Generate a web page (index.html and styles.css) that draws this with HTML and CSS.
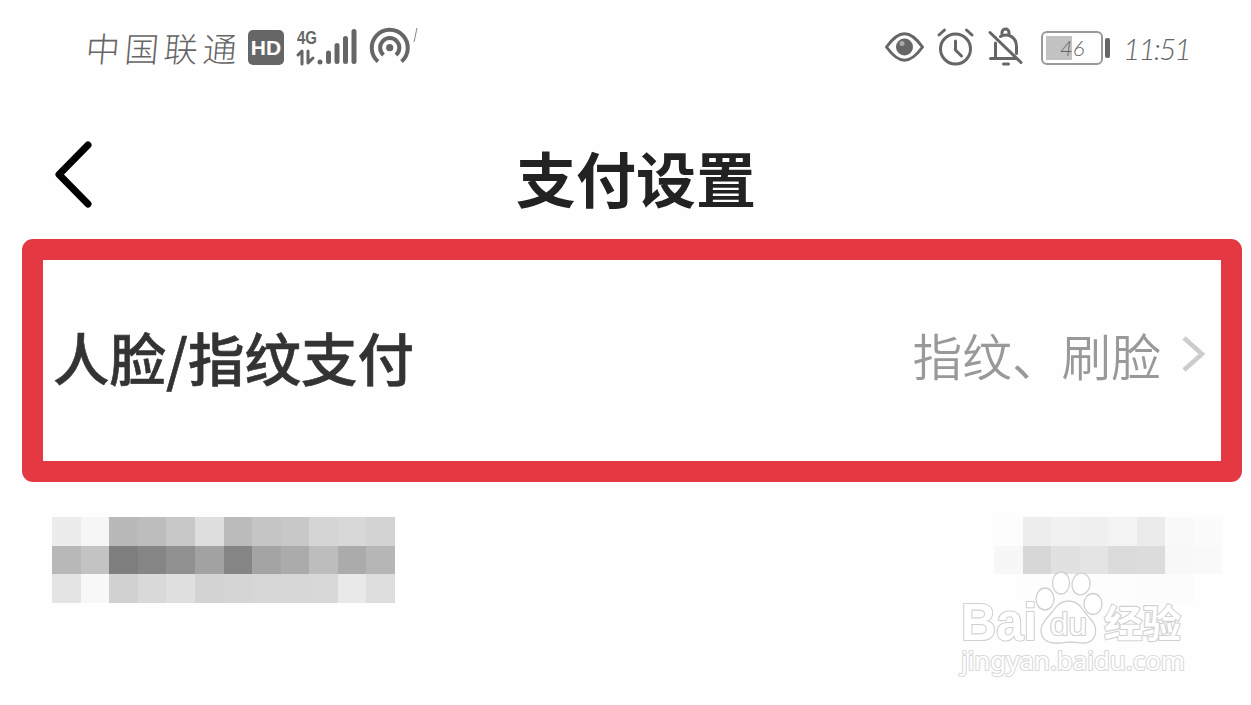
FILE: index.html
```html
<!DOCTYPE html>
<html lang="zh-CN">
<head>
  <meta charset="UTF-8">
  <meta name="viewport" content="width=device-width, initial-scale=1.0">
  <title>支付设置</title>
  <link rel="stylesheet" href="styles.css">
</head>
<body>
  <div class="status-bar">
    <div class="status-left">
      <span class="carrier">中国联通</span>
      <span class="hd">HD</span>
      <svg class="signal" width="62" height="42" viewBox="0 0 62 42">
        <text x="1" y="17" textLength="20" lengthAdjust="spacingAndGlyphs">4G</text>
        <path class="line" d="M2 28l4-4v13M12 24v12l5-5" />
        <path class="bars" d="M24 35v.1M32.500 26v8.500M41 18.500v16M49.500 11.500v23M58 4.500v30" />
      </svg>
      <svg class="hotspot" width="48" height="42" viewBox="0 0 48 42">
        <path d="M9 34.500a18 18 0 1 1 23.500 0M14.500 28a9.600 9.600 0 1 1 12.500 0" />
        <circle cx="20.700" cy="20.700" r="3.600" />
        <path class="thin" d="M48 1l-3 14" />
      </svg>
    </div>
    <div class="status-right">
      <svg class="icon" width="40" height="42" viewBox="0 0 40 42">
        <path d="M1.500 20C9 9.500 14 6.800 19.500 6.800S30 9.500 37.500 20C30 30.500 25 33.200 19.500 33.200S9 30.500 1.500 20z" />
        <circle class="fill" cx="19.500" cy="20" r="8.500" />
        <circle class="shine" cx="17" cy="16.500" r="2.500" />
      </svg>
      <svg class="icon alarm" width="38" height="42" viewBox="0 0 38 42">
        <circle cx="18.500" cy="22" r="15" />
        <path d="M18.500 14v9l6 6M2 8l5.500-5M35 8l-5.500-5" />
      </svg>
      <svg class="icon bell" width="36" height="42" viewBox="0 0 36 42">
        <path d="M2 5.500l31 30M7.500 16v15.500M2.500 31.500h25M12.500 9.500c8-4 16 1 16 10v7" />
        <path d="M14 8V5.500a3.500 3.500 0 0 1 7 0V8M15.500 37h5" />
      </svg>
      <div class="battery"><span>46</span></div>
      <span class="battery-tip"></span>
      <span class="time">11:51</span>
    </div>
  </div>

  <header class="header">
    <svg class="back" width="40" height="68" viewBox="0 0 40 68">
      <path d="M34 4L5 33.500l29 29.500" />
    </svg>
    <h1>支付设置</h1>
  </header>

  <div class="row highlight">
    <span class="label">人脸/指纹支付</span>
    <span class="value">指纹、刷脸</span>
    <svg class="arrow" width="24" height="38" viewBox="0 0 24 38">
      <path d="M2 3l18 16L2 35" />
    </svg>
  </div>

  <div class="row masked">
    <div class="mosaic mosaic-left" id="maskLabel"></div>
    <div class="mosaic mosaic-right" id="maskValue"></div>
  </div>

  <svg class="watermark" width="240" height="120" viewBox="0 0 240 120">
    <text class="logo" x="6" y="74" textLength="76" lengthAdjust="spacingAndGlyphs">Bai</text>
    <ellipse cx="90" cy="33" rx="9" ry="11" />
    <ellipse cx="106" cy="17" rx="8.500" ry="11" />
    <ellipse cx="126" cy="18" rx="9" ry="11" transform="rotate(8 126 18)" />
    <ellipse cx="138" cy="38" rx="9" ry="10.500" />
    <path d="M101 41c7-8 18-8 25 0 3 5 7 9 12 15 6 10 1 21-9 21-6 0-10-1-15-1s-9 2-15 1c-13-1-16-12-10-21 4-6 8-9 12-15z" />
    <text class="du" x="95" y="69" textLength="37" lengthAdjust="spacingAndGlyphs">du</text>
    <text class="cn" x="149" y="71" textLength="77" lengthAdjust="spacingAndGlyphs">经验</text>
    <text class="url" x="6" y="104" textLength="224" lengthAdjust="spacingAndGlyphs">jingyan.baidu.com</text>
  </svg>

  <script>
    // gray level of every mosaic cell, row by row
    const maskLabel = [
      "ec f6 b9 bd c8 de bb c5 c8 d5 d8 d3",
      "b8 c3 7e 85 90 a2 85 a4 ab bd ab b6",
      "e4 f8 d1 d9 df d3 d5 d7 d7 d8 e9 dd"
    ];
    const maskValue = [
      "fd ed f1 ef f3 eb f9 fb",
      "f7 d7 e1 e4 db dc f8 f9",
      "fe fd fd fd fd fc fc fe"
    ];

    function drawMosaic(id, rows) {
      const box = document.getElementById(id);
      rows.join(" ").split(" ").forEach(level => {
        const cell = document.createElement("i");
        cell.style.background = "#" + level + level + level;
        box.appendChild(cell);
      });
    }

    drawMosaic("maskLabel", maskLabel);
    drawMosaic("maskValue", maskValue);
  </script>
</body>
</html>
```
FILE: styles.css
```css
* { box-sizing: border-box; }
body { margin: 0; height: 705px; overflow: hidden; position: relative; background: #fefefe; font-family: "Noto Sans CJK SC", sans-serif; }
svg { display: block; flex: none; overflow: visible; fill: none; stroke-linecap: round; stroke-linejoin: round; }

.status-bar { height: 95px; padding: 0 60px 0 86px; display: flex; justify-content: space-between; align-items: center; color: #666; }
.status-left, .status-right { display: flex; align-items: center; height: 42px; }
.carrier { width: 162px; font-size: 34px; line-height: 42px; font-weight: 300; letter-spacing: 5px; white-space: nowrap; color: #666; transform: skewX(-5deg); }
.hd { width: 36px; height: 35px; border-radius: 5px; background: #666; color: #fff; font: bold 21px/35px "Liberation Sans", sans-serif; text-align: center; }
.signal { margin-left: 12px; }
.signal text { font: bold 19px "Liberation Sans", sans-serif; fill: #666; }
.signal .line { stroke: #666; stroke-width: 3; }
.signal .bars { stroke: #666; stroke-width: 5; }
.hotspot { margin-left: 11px; }
.hotspot path { stroke: #666; stroke-width: 4; stroke-linecap: butt; }
.hotspot circle { fill: #666; }
.hotspot .thin { stroke: #888; stroke-width: 1; }
.icon { stroke: #666; stroke-width: 3; }
.icon .fill { fill: #666; stroke: none; }
.icon .shine { fill: #aaa; stroke: none; }
.alarm { margin-left: 12px; }
.bell { margin-left: 13px; }
.battery { width: 62px; height: 34px; margin-left: 17px; padding: 3px; border: 2px solid #999; border-radius: 6px; }
.battery span { display: block; height: 24px; padding-left: 14px; background: linear-gradient(to right, #c2c2c2 26px, transparent 26px); font: italic 300 22px/23px Lato, sans-serif; color: #666; }
.battery-tip { width: 5px; height: 20px; margin-left: 2px; border-radius: 2px; background: #666; }
.time { width: 81px; padding-left: 13px; font: italic 300 30px/42px Lato, sans-serif; color: #666; white-space: nowrap; letter-spacing: -2px; }

.header { height: 144px; display: flex; align-items: flex-start; padding: 46px 0 0 54px; }
.back path { stroke: #000; stroke-width: 7; }
.header h1 { margin: -2px 0 0 422px; font-size: 60px; line-height: 76px; font-weight: 600; color: #222; }

.row { display: flex; }
.highlight { width: 1220px; height: 243px; margin-left: 22px; padding: 0 15px 13px 10px; align-items: center; border: 21px solid #e43843; border-radius: 11px; }
.label { flex: 1; padding-top: 3px; font-size: 56.500px; font-weight: 500; line-height: 80px; color: #333; -webkit-text-stroke: .6px #333; }
.value { font-size: 49.700px; font-weight: 350; line-height: 70px; color: #999; }
.arrow { margin-left: 21px; }
.arrow path { stroke: #ccc; stroke-width: 4.500; stroke-linecap: butt; stroke-linejoin: miter; }

.masked { justify-content: space-between; padding: 35px 29px 0 52px; }
.mosaic { display: grid; grid-auto-rows: 28.500px; }
.mosaic-left { width: 343px; grid-template-columns: repeat(12, 1fr); }
.mosaic-right { width: 228px; grid-template-columns: repeat(8, 1fr); }

.watermark { position: absolute; left: 955px; top: 566px; fill: #fff; stroke: #d0d0d0; stroke-width: 1.300; }
.watermark text { paint-order: stroke; stroke-width: 2.200; }
.watermark .logo { font: bold 51px "Liberation Sans", sans-serif; }
.watermark .du { font: 31px "Liberation Sans", sans-serif; }
.watermark .cn { font: 700 38px "Noto Sans CJK SC", sans-serif; }
.watermark .url { font: 25px "Noto Sans", sans-serif; stroke: #dadada; }
```
